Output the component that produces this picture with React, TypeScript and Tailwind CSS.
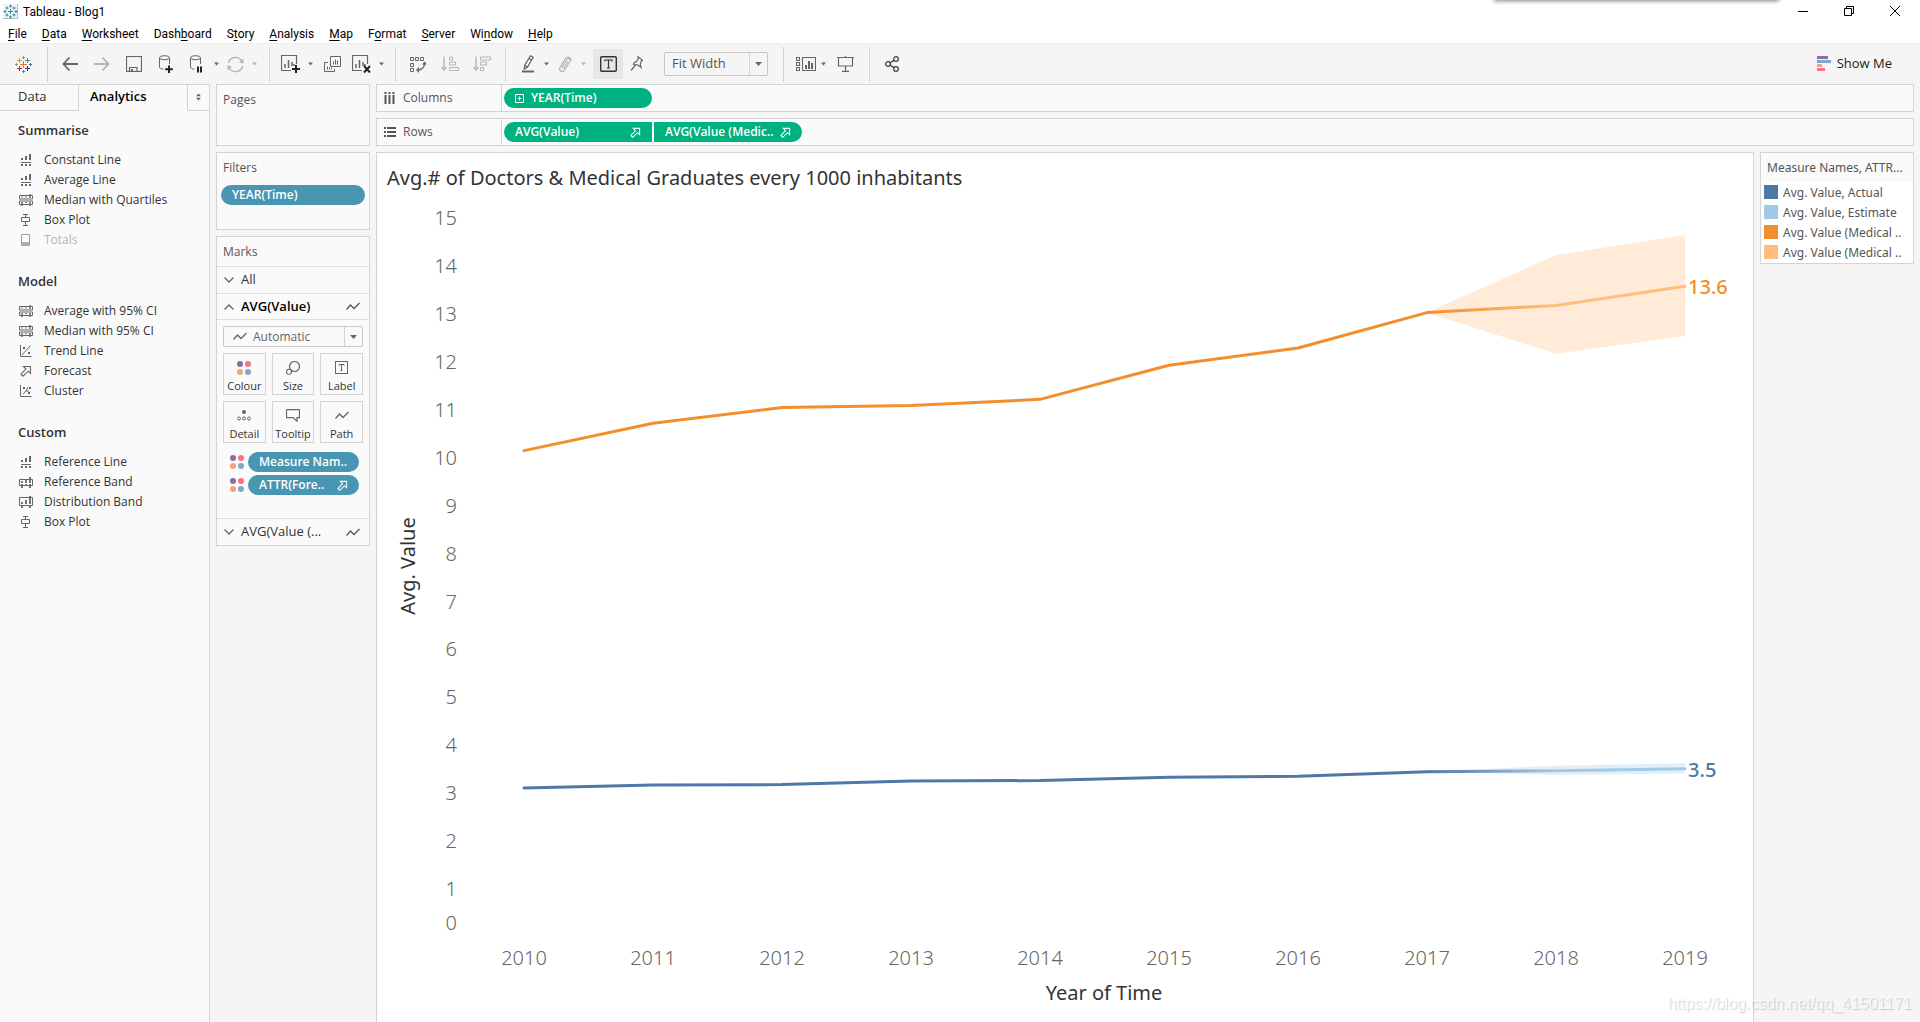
import React from 'react';

interface IconProps {
  w?: number;
  h?: number;
  className?: string;
  children: React.ReactNode;
}

const Svg = ({ w = 16, h = 16, className = '', children }: IconProps) => (
  <svg
    width={w}
    height={h}
    viewBox={`0 0 ${w} ${h}`}
    fill="none"
    stroke="currentColor"
    className={`shrink-0 ${className}`}
    aria-hidden="true"
  >
    {children}
  </svg>
);

/* ---------- Toolbar icons ---------- */

const Caret = ({ className = 'text-[#666]' }: { className?: string }) => (
  <Svg w={5} h={4} className={className}>
    <path d="M0 0.5h5L2.5 3.5z" fill="currentColor" stroke="none" />
  </Svg>
);

const TableauLogo = () => (
  <Svg w={17} h={17}>
    <path d="M8.5 5v7M5 8.5h7" stroke="#e8762d" />
    <path d="M4.5 2v5M2 4.5h5" stroke="#eb912c" />
    <path d="M12.5 2v5M10 4.5h5" stroke="#59879b" />
    <path d="M4.5 10v5M2 12.5h5" stroke="#c72035" />
    <path d="M12.5 10v5M10 12.5h5" stroke="#1f457e" />
    <path d="M8.5 0v3M7 1.5h3" stroke="#7199a6" />
    <path d="M8.5 14v3M7 15.5h3" stroke="#7b6a9c" />
    <path d="M1.5 7v3M0 8.5h3" stroke="#7199a6" />
    <path d="M15.5 7v3M14 8.5h3" stroke="#5b6591" />
  </Svg>
);

const AppIcon = () => (
  <Svg w={15} h={15}>
    <rect width="15" height="15" fill="#f4f4f4" stroke="none" />
    <path d="M14.5 0v14.5H0" stroke="#b9b9b9" />
    <path
      d="M7.5 5v5M5 7.5h5M4 2.5v3M2.5 4h3M11 2.5v3M9.5 4h3M4 9.5v3M2.5 11h3M11 9.5v3M9.5 11h3M7.5 0.5v3M6 2h3M7.5 11.5v3M6 13h3M2 6v3M0.5 7.5h3M13 6v3M11.5 7.5h3"
      stroke="#2f86b8"
    />
  </Svg>
);

const Back = () => (
  <Svg>
    <path d="M16 8H1.5M7.5 1.5L1.5 8l6 6.5" strokeWidth="1.8" />
  </Svg>
);

const Forward = () => (
  <Svg className="text-[#b4b4b4]">
    <path d="M0 8h14.5M8.5 1.5l6 6.5-6 6.5" strokeWidth="1.8" />
  </Svg>
);

const Save = () => (
  <Svg>
    <rect x="0.5" y="0.5" width="15" height="15" strokeWidth="1.2" />
    <path d="M3.5 15.5v-4H11v4" strokeWidth="1.2" />
    <rect x="5" y="13" width="2" height="3" fill="currentColor" stroke="none" />
  </Svg>
);

const AddData = () => (
  <Svg w={16} h={18}>
    <ellipse cx="6.5" cy="2.7" rx="5" ry="2" />
    <path d="M1.5 2.7v9.5c0 1 1.6 1.8 4 2M11.5 2.7V9" />
    <path d="M11 10.5V18M7.2 14.2h7.6" stroke="#222" strokeWidth="2" />
  </Svg>
);

const PauseData = () => (
  <Svg w={16} h={18}>
    <ellipse cx="5.5" cy="2.7" rx="5" ry="2" />
    <path d="M0.5 2.7v9.5c0 1 1.6 1.8 4 2M10.5 2.7V9" />
    <path d="M8 11.5v6M11 11.5v6" stroke="#222" strokeWidth="2" />
  </Svg>
);

const Refresh = () => (
  <Svg w={17} h={17} className="text-[#b4b4b4]">
    <path d="M1.5 7a7 7 0 0 1 13-2M15.5 10a7 7 0 0 1-13 2" strokeWidth="1.4" />
    <path d="M16.5 2.5v5l-4.5-1zM0.5 14.5v-5l4.5 1z" fill="currentColor" stroke="none" />
  </Svg>
);

const SheetFrame = () => (
  <>
    <path d="M15.5 9V0.5h-15v15H10" strokeWidth="1.2" />
    <path d="M4 9v4M7.5 5v8M11 7v4M13 9v2" strokeWidth="1.5" />
  </>
);

const NewSheet = () => (
  <Svg w={19} h={18}>
    <SheetFrame />
    <path d="M15 10v8M11 14h8" stroke="#222" strokeWidth="2" />
  </Svg>
);

const ClearSheet = () => (
  <Svg w={19} h={18}>
    <SheetFrame />
    <path d="M12 11l6 6.5M18 11l-6 6.5" stroke="#222" strokeWidth="2" />
  </Svg>
);

const Duplicate = () => (
  <Svg w={17} h={17}>
    <path d="M6.5 0.5h10v10h-10z" />
    <path d="M4 6.5H0.5v9h10V13" />
    <path d="M9.5 5.5v3M11.5 3.5v5M13.5 4.5v4M3.5 10.5v3M5.5 11.5v2M7.5 11.5v2" />
  </Svg>
);

const Swap = () => (
  <Svg w={17} h={17}>
    <path d="M0.5 1.5h3v3h-3zM5.5 1.5h3v3h-3zM10.5 1.5h3v3h-3zM0.5 7.5h3v3h-3zM0.5 12.5h3v3h-3z" />
    <path d="M14.5 7c0 4-2.500 7-7 7" strokeWidth="1.5" />
    <path d="M12 8.5l2.7-3 2.3 3zM9 11l-3 3 3 3z" fill="currentColor" stroke="none" />
  </Svg>
);

const SortAsc = () => (
  <Svg w={18} h={16} className="text-[#b4b4b4]">
    <path d="M3 0.5v13M0.5 11L3 14l2.5-3" strokeWidth="1.4" />
    <path d="M8.5 1h3v3h-3zM8.5 6h6v3h-6zM8.5 11.5h9v3h-9z" />
  </Svg>
);

const SortDesc = () => (
  <Svg w={18} h={16} className="text-[#b4b4b4]">
    <path d="M3 0.5v13M0.5 11L3 14l2.5-3" strokeWidth="1.4" />
    <path d="M7.5 1h10v3h-10zM7.5 6h6v3h-6zM7.5 11.5h3v3h-3z" />
  </Svg>
);

const Highlighter = () => (
  <Svg w={14} h={18}>
    <path
      d="M9.5 0.7l2.7 1.6-5.7 9.7-3.2 2 0.4-3.7zM3.8 10.3l2.7 1.7M8 3.2l2.7 1.7"
      strokeWidth="1.2"
    />
    <path d="M1 16.5h12" strokeWidth="2" />
  </Svg>
);

const Clip = () => (
  <Svg w={14} h={17} className="text-[#b4b4b4]">
    <path
      d="M4.5 10.5l4.5-7c1.5-2 4.2-0.5 3 1.7l-5.5 9c-2 2.8-6.2 0.6-4.6-2.6L7.2 2.9c2-3.2 6.8-1.6 5.3 2.2M4.5 10.5c-0.6 1.3 1 2.2 1.8 1L10 5.5"
      strokeWidth="1.2"
    />
  </Svg>
);

const TextLabel = () => (
  <Svg w={17} h={16}>
    <rect x="0.7" y="0.7" width="15.6" height="14.6" rx="1" strokeWidth="1.4" />
    <path d="M5 5.5V4h7v1.500M8.500 4v8M7 12h3" strokeWidth="1.2" />
  </Svg>
);

const Pin = () => (
  <Svg w={15} h={16}>
    <path
      d="M8 0.7l4.5 3.6-1.2 0.7-1 3.5 0.8 3-3.6-2.7-4-0.3 0.7-1.8 2.600-1.500 1.400-2.800zM5.500 9L1 14.500"
      strokeWidth="1.2"
    />
  </Svg>
);

const Cards = () => (
  <Svg w={20} h={15}>
    <path d="M0.5 0.5h3v3h-3zM0.5 5.5h3v3h-3zM0.5 10.5h3v3h-3zM6.5 0.5h13v13h-13z" strokeWidth="1.1" />
    <path d="M10 8v4M13 4v8M16 6v6" strokeWidth="2" />
  </Svg>
);

const Presentation = () => (
  <Svg w={17} h={16}>
    <path d="M0 1.5h17M1.5 1.5V10h14V1.5M8.5 10v5M5 15.3h7M8.5 0v1.5" strokeWidth="1.2" />
  </Svg>
);

const Share = () => (
  <Svg w={15} h={16} className="text-[#444]">
    <circle cx="3" cy="8" r="2.3" strokeWidth="1.3" />
    <circle cx="11" cy="3" r="2.3" strokeWidth="1.3" />
    <circle cx="11" cy="13" r="2.3" strokeWidth="1.3" />
    <path d="M5 7l4-2.6M5 9l4 2.6" strokeWidth="1.3" />
  </Svg>
);

/* ---------- Panel icons ---------- */

const RefLine = () => (
  <Svg w={14} h={12}>
    <path d="M3 4v2M7 2v4M11 0v6" strokeWidth="2" />
    <path d="M2 8.5h10" />
    <path d="M3 10v2M7 10v2M11 10v2" strokeWidth="2" />
  </Svg>
);

const MedianQ = () => (
  <Svg w={14} h={12}>
    <path d="M0.5 1.5h13V5h-13zM0.5 7h13v3.5h-13z" />
    <path d="M3 2.5v1M7 2.5v1M11 0v4M3 8v4M7 8v1M11 8v4" strokeWidth="1.5" />
  </Svg>
);

const BoxPlot = () => (
  <Svg w={14} h={12}>
    <path d="M4 0.5h5M6.5 0.5v3M2.5 3.5h8v4h-8zM6.5 7.5V11M4 11.5h5" />
  </Svg>
);

const Totals = () => (
  <Svg w={14} h={12}>
    <path d="M2.5 0.5h8v11h-8z" />
    <path d="M2.5 9.5h8" strokeWidth="2.5" />
  </Svg>
);

const Trend = () => (
  <Svg w={14} h={12}>
    <path d="M1.5 0v11.5h11M3 10l8.5-9.5" />
    <path d="M4 2h2v2H4zM9 7h2v2H9z" fill="currentColor" stroke="none" />
  </Svg>
);

const Forecast = ({ className = '' }: { className?: string }) => (
  <Svg w={12} h={12} className={className}>
    <path d="M3.5 1.5h7v7L8.2 6.2 3 11.2 0.9 9.2 6 4z" strokeWidth="1.1" />
  </Svg>
);

const Cluster = () => (
  <Svg w={14} h={12}>
    <path d="M1.5 0v11.5h11M4 9l3-3 2-4M7 6h3" />
    <path d="M4 2h2v2H4zM10 2h2v2h-2zM9 7h2v2H9z" fill="currentColor" stroke="none" />
  </Svg>
);

const RefBand = () => (
  <Svg w={14} h={12}>
    <path d="M0.5 3.5h13v6h-13z" />
    <path d="M3 5v2M7 3v4M11 1v6M3 8v4M7 8v1M11 8v4" strokeWidth="1.8" />
  </Svg>
);

const DistBand = () => (
  <Svg w={14} h={12}>
    <path d="M0.5 1.5h13v8h-13z" />
    <path d="M3 6v2M7 4v4M11 0v8M3 10v2M11 10v2" strokeWidth="1.8" />
  </Svg>
);

const LineMark = () => (
  <Svg w={14} h={9}>
    <path d="M0.5 7.5L4.5 3 8 6.5 13.5 1" strokeWidth="1.3" />
  </Svg>
);

const ColourDots = () => (
  <Svg w={14} h={14}>
    <circle cx="3" cy="3" r="3" fill="#86709c" stroke="none" />
    <circle cx="11" cy="3" r="3" fill="#fa7186" stroke="none" />
    <circle cx="3" cy="11" r="3" fill="#f0a57a" stroke="none" />
    <circle cx="11" cy="11" r="3" fill="#82a4cd" stroke="none" />
  </Svg>
);

const SizeIcon = () => (
  <Svg w={14} h={14}>
    <circle cx="8.500" cy="5.5" r="5" strokeWidth="1.2" />
    <circle cx="3" cy="10.8" r="2.5" fill="#fafafa" strokeWidth="1.1" />
  </Svg>
);

const LabelIcon = () => (
  <Svg w={13} h={13}>
    <rect x="0.5" y="0.5" width="12" height="12" />
    <path d="M4 4.5v-1h5v1M6.5 3.5v6M5.5 9.5h2" />
  </Svg>
);

const DetailIcon = () => (
  <Svg w={14} h={11}>
    <circle cx="7" cy="2" r="2" fill="currentColor" stroke="none" />
    <circle cx="2" cy="8.5" r="1.5" />
    <circle cx="7" cy="8.5" r="1.5" />
    <circle cx="12" cy="8.5" r="1.5" />
  </Svg>
);

const TooltipIcon = () => (
  <Svg w={14} h={13}>
    <path
      d="M1 0.6h12q0.5 0 0.5 0.5v7.5H11v3.6L7 8.6H0.5V1.1Q0.5 0.6 1 0.6z"
      strokeWidth="1.2"
    />
  </Svg>
);

const Chevron = ({ up = false }: { up?: boolean }) => (
  <Svg w={10} h={6} className="text-[#666]">
    <path d={up ? 'M0.5 5.5L5 1l4.5 4.5' : 'M0.5 0.5L5 5l4.5-4.5'} strokeWidth="1.3" />
  </Svg>
);

/* ---------- Data ---------- */

const menus: [string, string, string][] = [
  ['', 'F', 'ile'],
  ['', 'D', 'ata'],
  ['', 'W', 'orksheet'],
  ['Dash', 'b', 'oard'],
  ['S', 't', 'ory'],
  ['', 'A', 'nalysis'],
  ['', 'M', 'ap'],
  ['F', 'o', 'rmat'],
  ['', 'S', 'erver'],
  ['Wi', 'n', 'dow'],
  ['', 'H', 'elp'],
];

const sections = [
  {
    title: 'Summarise',
    items: [
      { label: 'Constant Line', icon: <RefLine /> },
      { label: 'Average Line', icon: <RefLine /> },
      { label: 'Median with Quartiles', icon: <MedianQ /> },
      { label: 'Box Plot', icon: <BoxPlot /> },
      { label: 'Totals', icon: <Totals />, disabled: true },
    ],
  },
  {
    title: 'Model',
    items: [
      { label: 'Average with 95% CI', icon: <MedianQ /> },
      { label: 'Median with 95% CI', icon: <MedianQ /> },
      { label: 'Trend Line', icon: <Trend /> },
      { label: 'Forecast', icon: <Forecast className="mx-px" /> },
      { label: 'Cluster', icon: <Cluster /> },
    ],
  },
  {
    title: 'Custom',
    items: [
      { label: 'Reference Line', icon: <RefLine /> },
      { label: 'Reference Band', icon: <RefBand /> },
      { label: 'Distribution Band', icon: <DistBand /> },
      { label: 'Box Plot', icon: <BoxPlot /> },
    ],
  },
];

const markButtons = [
  { label: 'Colour', icon: <ColourDots /> },
  { label: 'Size', icon: <SizeIcon /> },
  { label: 'Label', icon: <LabelIcon /> },
  { label: 'Detail', icon: <DetailIcon /> },
  { label: 'Tooltip', icon: <TooltipIcon /> },
  { label: 'Path', icon: <LineMark /> },
];

const legend = [
  { label: 'Avg. Value, Actual', color: 'bg-[#4e79a7]' },
  { label: 'Avg. Value, Estimate', color: 'bg-[#a0cbe8]' },
  { label: 'Avg. Value (Medical ..', color: 'bg-[#f28e2b]' },
  { label: 'Avg. Value (Medical ..', color: 'bg-[#ffbe7d]' },
];

const years = [2010, 2011, 2012, 2013, 2014, 2015, 2016, 2017, 2018, 2019];

const series = [
  {
    id: 'graduates',
    values: [10.15, 10.72, 11.05, 11.09, 11.22, 11.93, 12.29, 13.03, 13.18, 13.58],
    upper: [13.03, 14.23, 14.65],
    lower: [13.03, 12.17, 12.54],
    actual: '#f28e2b',
    estimate: '#ffbe7d',
    label: '13.6',
  },
  {
    id: 'doctors',
    values: [3.11, 3.17, 3.18, 3.255, 3.265, 3.335, 3.355, 3.45, 3.47, 3.51],
    upper: [3.45, 3.575, 3.625],
    lower: [3.45, 3.38, 3.41],
    actual: '#4e79a7',
    estimate: '#a0cbe8',
    label: '3.5',
  },
];

const xPos = (i: number) => 147 + 129 * i;
const yPos = (v: number) => 736 - 47.92 * v;

/* ---------- Pieces ---------- */

const ToolButton = ({ label, children }: { label: string; children: React.ReactNode }) => (
  <button type="button" aria-label={label} className="flex items-center">
    {children}
  </button>
);

const Pill = ({ className, children }: { className: string; children: React.ReactNode }) => (
  <button type="button" className={`flex h-5 items-center text-left font-semibold text-white ${className}`}>
    {children}
  </button>
);

const Chart = () => (
  <svg viewBox="0 0 1376 821" className="block h-auto w-full" role="img" aria-label="Avg. Value by Year of Time">
    <g className="fill-[#666] font-light" fontSize="20">
      {Array.from({ length: 16 }, (_, v) => (
        <text key={v} x="80" y={v === 0 ? 729 : yPos(v) + 7} textAnchor="end">
          {v}
        </text>
      ))}
      {years.map((year, i) => (
        <text key={year} x={xPos(i)} y="764" textAnchor="middle">
          {year}
        </text>
      ))}
    </g>
    <g className="fill-[#333]" fontSize="20">
      <text x="727" y="799" textAnchor="middle">
        Year of Time
      </text>
      <text transform="translate(38 365) rotate(-90)" textAnchor="middle">
        Avg. Value
      </text>
    </g>
    {series.map((s) => {
      const pts = s.values.map((v, i) => `${xPos(i)},${yPos(v)}`);
      const band = [
        ...s.upper.map((v, i) => `${xPos(7 + i)},${yPos(v)}`),
        ...s.lower.map((v, i) => `${xPos(7 + i)},${yPos(v)}`).reverse(),
      ];
      return (
        <g key={s.id}>
          <linearGradient id={s.id} gradientUnits="userSpaceOnUse" x1={xPos(7)} x2={xPos(8)} y1="0" y2="0">
            <stop offset="0" stopColor={s.actual} />
            <stop offset="1" stopColor={s.estimate} />
          </linearGradient>
          <polygon points={band.join(' ')} fill={s.estimate} opacity="0.3" />
          <polyline
            points={pts.join(' ')}
            fill="none"
            stroke={`url(#${s.id})`}
            strokeWidth="3"
            strokeLinecap="round"
            strokeLinejoin="round"
          />
          <text x="1311" y={yPos(s.values[9]) + 8} fill={s.actual} fontSize="20" className="font-medium">
            {s.label}
          </text>
        </g>
      );
    })}
  </svg>
);

const App = () => {
  return (
    <div className="relative flex min-h-screen flex-col overflow-hidden bg-[#f5f5f5] font-['Open_Sans',sans-serif] text-xs text-[#333]">
      {/* Shadow of the window docked above */}
      <div className="absolute -top-2 right-[141px] h-2 w-[285px] shadow-[0_1px_4px_rgba(0,0,0,0.5)]" />

      {/* Title bar */}
      <header className="bg-white font-['Roboto',sans-serif] text-black">
        <div className="flex h-[22px] items-center justify-between">
          <div className="flex items-center gap-[5px] pt-px pl-[3px]">
            <AppIcon />
            <span>Tableau - Blog1</span>
          </div>
          <div className="flex pr-0.5">
            <button type="button" aria-label="Minimise" className="flex h-5 w-[46px] items-center justify-center">
              <Svg w={10} h={10}><path d="M0 5.5h10" /></Svg>
            </button>
            <button type="button" aria-label="Restore" className="flex h-5 w-[46px] items-center justify-center">
              <Svg w={10} h={10}><path d="M0.5 2.5h7v7h-7zM2.5 2.5v-2h7v7h-2" /></Svg>
            </button>
            <button type="button" aria-label="Close" className="flex h-5 w-[46px] items-center justify-center">
              <Svg w={10} h={10}><path d="M0 0l10 10M10 0L0 10" /></Svg>
            </button>
          </div>
        </div>
        <nav className="flex h-[21px] items-center gap-[15px] pt-0.5 pl-2">
          {menus.map(([before, key, after]) => (
            <button type="button" key={before + key + after}>
              {before}
              <span className="underline underline-offset-2">{key}</span>
              {after}
            </button>
          ))}
        </nav>
      </header>

      {/* Toolbar */}
      <div className="flex h-[41px] items-center border-t border-[#ececec] text-[#666]">
        <div className="flex h-[35px] items-center border-r border-[#d4d4d4] px-[15px]">
          <ToolButton label="Start page"><TableauLogo /></ToolButton>
        </div>
        <div className="flex h-[35px] items-center gap-4 border-r border-[#d4d4d4] pr-3 pl-3.5">
          <ToolButton label="Undo"><Back /></ToolButton>
          <ToolButton label="Redo"><Forward /></ToolButton>
          <ToolButton label="Save"><Save /></ToolButton>
          <ToolButton label="New data source"><AddData /></ToolButton>
          <div className="flex items-center gap-2">
            <ToolButton label="Pause auto updates"><PauseData /></ToolButton>
            <Caret />
            <ToolButton label="Run update"><Refresh /></ToolButton>
            <Caret className="text-[#b4b4b4]" />
          </div>
        </div>
        <div className="flex h-[35px] items-center gap-[11px] border-r border-[#d4d4d4] px-[11px]">
          <div className="flex items-center gap-2">
            <ToolButton label="New worksheet"><NewSheet /></ToolButton>
            <Caret />
          </div>
          <ToolButton label="Duplicate"><Duplicate /></ToolButton>
          <div className="flex items-center gap-2">
            <ToolButton label="Clear sheet"><ClearSheet /></ToolButton>
            <Caret />
          </div>
        </div>
        <div className="flex h-[35px] items-center gap-3.5 border-r border-[#d4d4d4] px-3.5">
          <ToolButton label="Swap rows and columns"><Swap /></ToolButton>
          <ToolButton label="Sort ascending"><SortAsc /></ToolButton>
          <ToolButton label="Sort descending"><SortDesc /></ToolButton>
        </div>
        <div className="flex h-[35px] items-center gap-[7px] border-r border-[#d4d4d4] px-[15px]">
          <div className="flex items-center gap-[9px]">
            <ToolButton label="Highlight"><Highlighter /></ToolButton>
            <Caret />
            <ToolButton label="Group members"><Clip /></ToolButton>
            <Caret className="text-[#b4b4b4]" />
          </div>
          <button
            type="button"
            aria-label="Show mark labels"
            className="flex size-[30px] items-center justify-center bg-[#e6e6e6] text-[#333]"
          >
            <TextLabel />
          </button>
          <ToolButton label="Fix axes"><Pin /></ToolButton>
          <div className="relative ml-3 h-6">
            <select
              aria-label="Fit"
              className="h-6 w-[104px] appearance-none rounded-xs border border-[#c8c8c8] bg-[#f5f5f5] pl-[7px] text-[13px] text-[#555]"
            >
              <option>Fit Width</option>
            </select>
            <span className="pointer-events-none absolute inset-y-px right-px flex w-[18px] items-center justify-center border-l border-[#d4d4d4]">
              <Svg w={7} h={4}>
                <path d="M0 0h7L3.5 4z" fill="currentColor" stroke="none" />
              </Svg>
            </span>
          </div>
        </div>
        <div className="flex h-[35px] items-center gap-[11px] border-r border-[#d4d4d4] pr-[15px] pl-3">
          <div className="flex items-center gap-[5px]">
            <ToolButton label="Show/hide cards"><Cards /></ToolButton>
            <Caret />
          </div>
          <ToolButton label="Presentation mode"><Presentation /></ToolButton>
        </div>
        <div className="flex items-center pl-[15px]">
          <ToolButton label="Share"><Share /></ToolButton>
        </div>
        <button type="button" className="mr-7 ml-auto flex items-center gap-1.5 text-[13px] text-[#222]">
          <Svg w={14} h={15}>
            <path d="M0 1.5h11" stroke="#86709c" strokeWidth="3" />
            <path d="M0 5.5h14" stroke="#82a4cd" strokeWidth="3" />
            <path d="M0 9.5h5" stroke="#f0a57a" strokeWidth="3" />
            <path d="M0 13.5h8" stroke="#fa7186" strokeWidth="3" />
          </Svg>
          Show Me
        </button>
      </div>

      <div className="flex flex-1 gap-1.5">
        {/* Analytics pane */}
        <aside className="w-[210px] shrink-0 border-t border-r border-[#d4d4d4] bg-[#fafafa]">
          <div className="flex h-[26px] text-[13px]">
            <button type="button" className="w-[79px] border-r border-b border-[#d4d4d4] pb-px pl-[18px] text-left">
              Data
            </button>
            <button type="button" className="flex-1 pb-0.5 pl-[11px] text-left font-semibold text-black">
              Analytics
            </button>
            <button
              type="button"
              aria-label="Pane options"
              className="flex w-[22px] items-center justify-center border-b border-l border-[#d4d4d4] pb-0.5 text-[#5b6776]"
            >
              <Svg w={5} h={8}>
                <path d="M0 3.200h5L2.5 0.5zM0 4.800h5L2.5 7.5z" fill="currentColor" stroke="none" />
              </Svg>
            </button>
          </div>
          <div className="flex flex-col gap-[21px] pt-[9px]">
            {sections.map((section) => (
              <section key={section.title}>
                <h2 className="mb-2.5 h-5 pl-[18px] text-[13px] leading-5 font-semibold">{section.title}</h2>
                <ul>
                  {section.items.map((item) => (
                    <li key={item.label}>
                      <button
                        type="button"
                        disabled={item.disabled}
                        className="flex h-5 w-full items-center gap-[11px] pl-[19px] text-[#333] disabled:text-[#b4b4b4]"
                      >
                        <span className={item.disabled ? 'text-[#a0a0a0]' : 'text-[#666]'}>{item.icon}</span>
                        {item.label}
                      </button>
                    </li>
                  ))}
                </ul>
              </section>
            ))}
          </div>
        </aside>

        {/* Pages, filters and marks cards */}
        <div className="flex w-[154px] shrink-0 flex-col gap-1.5">
          <section className="h-[62px] border border-[#d4d4d4] bg-[#fafafa] px-1.5 pt-1.5">
            <h3 className="leading-[18px] text-[#555]">Pages</h3>
          </section>
          <section className="h-[78px] border border-[#d4d4d4] bg-[#fafafa] pt-1.5">
            <h3 className="px-1.5 leading-[18px] text-[#555]">Filters</h3>
            <div className="px-1 pt-2">
              <Pill className="w-full rounded-full bg-[#4996b2] px-[11px]">YEAR(Time)</Pill>
            </div>
          </section>
          <section className="border border-[#d4d4d4] bg-[#fafafa]">
            <h3 className="px-1.5 pt-1.5 pb-[5px] leading-[18px] text-[#555]">Marks</h3>
            <button type="button" className="flex h-[27px] w-full items-center gap-[7px] border-t border-[#e0e0e0] px-[7px] text-[13px]">
              <Chevron />
              All
            </button>
            <button
              type="button"
              className="flex h-[26px] w-full items-center gap-[7px] border-t border-[#e0e0e0] pr-[9px] pl-[7px] text-[13px] font-semibold text-black"
            >
              <Chevron up />
              AVG(Value)
              <span className="ml-auto text-[#555]"><LineMark /></span>
            </button>
            <div className="border-t border-[#e0e0e0] px-1.5 pt-1.5 pb-[23px]">
              <div className="relative h-[21px] text-[#666]">
                <select
                  aria-label="Mark type"
                  className="h-[21px] w-full appearance-none rounded-xs border border-[#c8c8c8] bg-[#fafafa] pl-[29px] text-xs"
                >
                  <option>Automatic</option>
                </select>
                <span className="pointer-events-none absolute inset-y-0 left-2.5 flex items-center"><LineMark /></span>
                <span className="pointer-events-none absolute inset-y-px right-px flex w-[18px] items-center justify-center border-l border-[#d4d4d4]">
                  <Svg w={7} h={4}>
                    <path d="M0 0h7L3.5 4z" fill="currentColor" stroke="none" />
                  </Svg>
                </span>
              </div>
              <div className="mt-1.5 grid grid-cols-3 gap-1.5">
                {markButtons.map((b) => (
                  <button
                    type="button"
                    key={b.label}
                    className="flex h-[42px] flex-col items-center justify-between border border-[#d4d4d4] pt-1.5 text-[11px] leading-4"
                  >
                    <span className="flex h-[15px] items-center text-[#666]">{b.icon}</span>
                    {b.label}
                  </button>
                ))}
              </div>
              <div className="mt-[9px] flex flex-col gap-[3px] pr-1 pl-[7px]">
                <div className="flex items-center gap-1">
                  <ColourDots />
                  <Pill className="flex-1 rounded-full bg-[#4996b2] px-[11px]">Measure Nam..</Pill>
                </div>
                <div className="flex items-center gap-1">
                  <ColourDots />
                  <Pill className="flex-1 justify-between rounded-full bg-[#4996b2] px-[11px]">
                    ATTR(Fore..
                    <Forecast className="size-[11px]" />
                  </Pill>
                </div>
              </div>
            </div>
            <button
              type="button"
              className="flex h-[27px] w-full items-center gap-[7px] border-t border-[#e0e0e0] pr-[9px] pl-[7px] text-[13px]"
            >
              <Chevron />
              AVG(Value (...
              <span className="ml-auto text-[#555]"><LineMark /></span>
            </button>
          </section>
        </div>

        {/* Shelves and view */}
        <main className="flex min-w-0 flex-1 flex-col gap-1.5 pr-1.5">
          <div className="flex h-7 items-center border border-[#d4d4d4] bg-[#fafafa]">
            <div className="flex h-full w-[125px] items-center gap-2 border-r border-[#d4d4d4] pl-[7px] text-[#555]">
              <Svg w={11} h={12}>
                <path d="M1.5 0v2M5.5 0v2M9.5 0v2M1.5 3v9M5.5 3v9M9.5 3v9" strokeWidth="2" />
              </Svg>
              Columns
            </div>
            <Pill className="ml-0.5 w-[148px] gap-[7px] rounded-full bg-[#00b180] px-[11px]">
              <Svg w={9} h={9}>
                <path d="M0.5 0.5h8v8h-8zM4.5 2.5v4M2.5 4.5h4" />
              </Svg>
              YEAR(Time)
            </Pill>
          </div>
          <div className="flex h-7 items-center border border-[#d4d4d4] bg-[#fafafa]">
            <div className="flex h-full w-[125px] items-center gap-[7px] border-r border-[#d4d4d4] pl-[7px] text-[#555]">
              <Svg w={12} h={10}>
                <path d="M0 1h2M0 5h2M0 9h2M3 1h9M3 5h9M3 9h9" strokeWidth="2" />
              </Svg>
              Rows
            </div>
            <div className="ml-0.5 flex gap-0.5">
              <Pill className="w-[148px] justify-between rounded-l-full bg-[#00b180] px-[11px]">
                AVG(Value)
                <Forecast className="size-[11px]" />
              </Pill>
              <Pill className="w-[148px] justify-between rounded-r-full bg-[#00b180] px-[11px]">
                AVG(Value (Medic..
                <Forecast className="size-[11px]" />
              </Pill>
            </div>
          </div>

          <div className="flex flex-1 gap-1.5">
            <section className="min-w-0 flex-1 border border-b-0 border-[#d4d4d4] bg-white font-['Noto_Sans',sans-serif]">
              <h1 className="h-12 pt-3 pl-2.5 text-xl leading-[26px]">
                Avg.# of Doctors &amp; Medical Graduates every 1000 inhabitants
              </h1>
              <Chart />
            </section>

            <section className="w-[154px] shrink-0 self-start border border-[#d4d4d4] bg-white font-['Noto_Sans',sans-serif]">
              <h3 className="h-[29px] bg-[#fafafa] pl-1.5 leading-[29px] whitespace-nowrap text-[#555]">
                Measure Names, ATTR...
              </h3>
              <ul className="pb-px">
                {legend.map((item, i) => (
                  <li key={i} className="flex h-5 items-center gap-[5px] pl-[3px] text-[#555]">
                    <span className={`size-3.5 ${item.color}`} />
                    <span className="pt-0.5">{item.label}</span>
                  </li>
                ))}
              </ul>
            </section>
          </div>
        </main>
      </div>

      <p className="absolute right-2 bottom-1.5 font-['Liberation_Sans',sans-serif] text-base text-white/70 [text-shadow:1px_1px_1px_rgba(0,0,0,0.18)]">
        https://blog.csdn.net/qq_41501171
      </p>
    </div>
  );
};

export default App;
